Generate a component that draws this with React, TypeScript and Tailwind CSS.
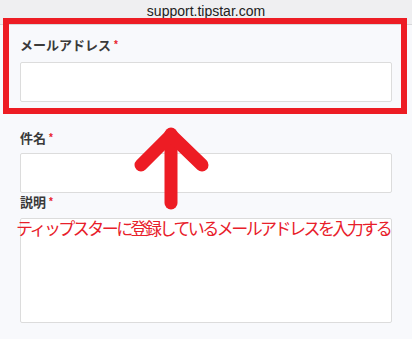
import React from "react";

function Label({ text }: { text: string }) {
  return (
    <div className="flex items-start text-[13px] leading-[18px] font-semibold text-[#3a3a3a]">
      <span>{text}</span>
      <span className="ml-[3px] mt-[2px] text-[10px] leading-[12px] text-[#e8202a]">*</span>
    </div>
  );
}

function App() {
  return (
    <div
      className="relative w-[412px] h-[339px] overflow-hidden bg-[#f8f9fc]"
      style={{ fontFamily: '"Liberation Sans", "Noto Sans CJK JP", sans-serif' }}
    >
      <div className="h-[25px] bg-[#efeff1] border-b border-[#d8d8da] flex items-center justify-center text-[14px] text-[#222] pb-[2px]">
        support.tipstar.com
      </div>

      <div className="px-[20px] pt-[12px]">
        <Label text="メールアドレス" />
        <div className="mt-[7px] h-[40px] bg-white border border-[#dcdcdc] rounded-[2px]" />

        <div className="mt-[28px]">
          <Label text="件名" />
        </div>
        <div className="mt-[5px] h-[40px] bg-white border border-[#dcdcdc] rounded-[2px]" />

        <div className="mt-[1px]">
          <Label text="説明" />
        </div>
        <div className="mt-[6px] h-[105px] bg-white border border-[#dcdcdc] rounded-[2px]" />
      </div>

      {/* annotations */}
      <div className="absolute left-[3px] top-[18px] w-[404px] h-[96px] border-[6px] border-[#ed1c24]" />

      <svg className="absolute left-0 top-0" width="412" height="339" viewBox="0 0 412 339">
        <g stroke="#ed1c24" strokeWidth="13" strokeLinecap="round" strokeLinejoin="round" fill="none">
          <line x1="171" y1="134" x2="171" y2="203" />
          <polyline points="141,165 171,135 202,165" />
        </g>
      </svg>

      <div
        className="absolute left-[16px] top-[218px] text-[17px] leading-[20px] tracking-[-2.55px] text-[#e8202a] whitespace-nowrap"
        style={{ fontFamily: '"Noto Sans CJK JP", sans-serif' }}
      >
        ティップスターに登録しているメールアドレスを入力する
      </div>
    </div>
  );
}

export default App;
